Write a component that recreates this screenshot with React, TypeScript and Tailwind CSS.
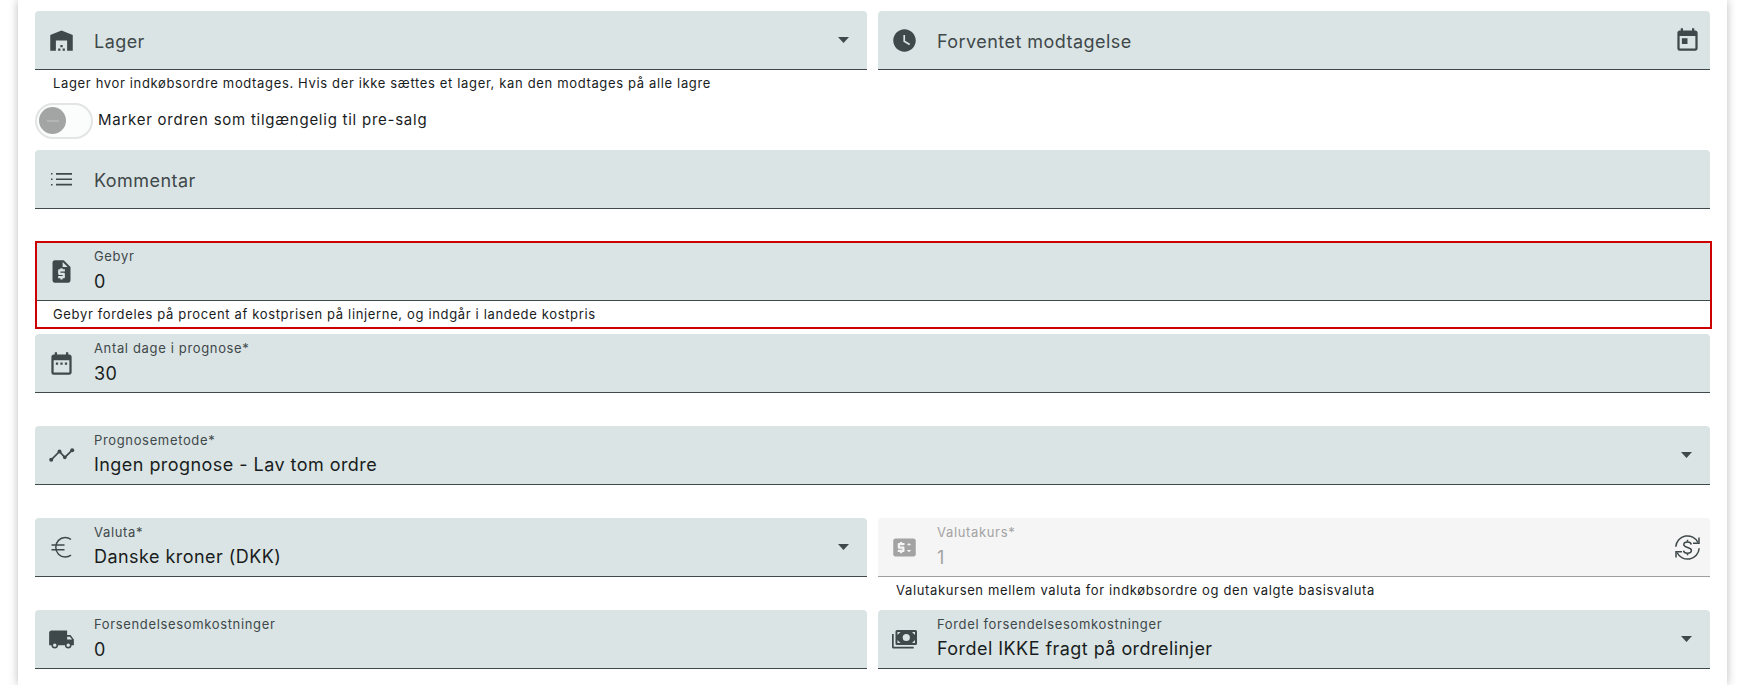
import { useId, useState } from "react";
import type { ReactNode } from "react";
import {
  MdDateRange,
  MdLocalShipping,
  MdPriceChange,
  MdRequestQuote,
  MdToday,
  MdWarehouse,
  MdWatchLater,
} from "react-icons/md";

function ListIcon() {
  return (
    <svg viewBox="0 0 27 27" className="size-[27px]" fill="currentColor" aria-hidden="true">
      <path d="M3 7h1.5v1.5H3zM3 12.5h1.5V14H3zM3 18h1.5v1.5H3zM8 7h16v1.7H8zM8 12.4h16v1.7H8zM8 17.8h16v1.7H8z" />
    </svg>
  );
}

function TimelineIcon() {
  return (
    <svg viewBox="0 0 27 27" className="size-[27px]" fill="currentColor" aria-hidden="true">
      <path d="M3.2 17.8l8.3-8.4 5.300 6 7.400-7.200" fill="none" stroke="currentColor" strokeWidth="1.7" />
      <circle cx="3.2" cy="17.8" r="2" />
      <circle cx="11.5" cy="9.4" r="2" />
      <circle cx="16.8" cy="15.4" r="1.800" />
      <circle cx="24.2" cy="8.2" r="2" />
    </svg>
  );
}

function EuroIcon() {
  return (
    <svg viewBox="0 0 27 27" className="size-[27px]" fill="none" stroke="currentColor" strokeWidth="1.5" aria-hidden="true">
      <path d="M23 5.5C21.3 4.2 19.3 3.6 17.2 3.6c-5.400 0-9.400 4.200-9.400 9.700s4 9.700 9.400 9.700c2.100 0 4.100-.6 5.800-1.900" />
      <path d="M3.500 11h13M3.500 15.700h13" />
    </svg>
  );
}

function CashIcon() {
  return (
    <svg viewBox="0 0 27 27" className="size-[27px]" fill="currentColor" aria-hidden="true">
      <path
        fillRule="evenodd"
        d="M6 4h18.500a1.500 1.500 0 0 1 1.500 1.500v12a1.500 1.500 0 0 1-1.500 1.500H6a1.500 1.500 0 0 1-1.500-1.500v-12A1.500 1.500 0 0 1 6 4zm9.300 3.900a3.600 3.600 0 1 0 0 7.200 3.600 3.600 0 0 0 0-7.200zM6.500 6v3L9.500 6zM24 6h-3l3 3zM6.500 17h3l-3-3zM24 17v-3l-3 3z"
      />
      <path d="M1 8h1.700v12.800h20v1.700H2.500A1.500 1.500 0 0 1 1 21z" />
    </svg>
  );
}

function ExchangeIcon() {
  return (
    <svg viewBox="0 0 27 27" className="size-[27px]" fill="none" stroke="currentColor" strokeWidth="1.5" aria-hidden="true">
      <path d="M1.800 12.700A11.700 11.700 0 0 1 24 8.500M25.200 14.300A11.700 11.700 0 0 1 3 18.500" />
      <path d="M25 3.500v5.700h-6M2 23.500v-5.700h6" />
      <path d="M17.300 10.500c-.3-1.600-1.800-2.600-3.800-2.600s-3.700 1-3.700 2.700c0 3.700 7.600 2.200 7.600 6 0 1.700-1.600 2.700-3.900 2.700s-3.700-1-4-2.700M13.500 5.800v2M13.500 19.300v2" />
    </svg>
  );
}

function Caret() {
  return (
    <svg viewBox="0 0 11 6" className="h-[6px] w-[11px]" fill="currentColor" aria-hidden="true">
      <path d="M0 0h11L5.500 6z" />
    </svg>
  );
}

type FieldProps = {
  label: string;
  icon: ReactNode;
  value?: string;
  hint?: string;
  select?: boolean;
  disabled?: boolean;
  action?: ReactNode;
  highlight?: boolean;
};

function Field({ label, icon, value, hint, select, disabled, action, highlight }: FieldProps) {
  const id = useId();
  const filled = value !== undefined;

  const box = disabled
    ? "border-[#9e9e9e] bg-[#f5f5f5] text-[#a3a3a3]"
    : "border-[#3f484a] bg-[#dae4e4] text-[#3f484a]";
  const control = disabled ? "text-[#a3a3a3]" : "text-[#191c1d]";

  return (
    <div className="relative h-[92px] min-w-0 flex-1">
      <div className={`flex h-[59px] items-center rounded-t border-b ${box}`}>
        <span className="flex w-[59px] shrink-0 pl-[13px]">{icon}</span>
        <div className={filled ? "flex min-w-0 flex-1 flex-col" : "grid min-w-0 flex-1 items-center pt-1"}>
          <label
            htmlFor={id}
            className={
              filled
                ? "text-[13px] leading-5 tracking-wider"
                : "col-start-1 row-start-1 text-lg leading-7 tracking-wide"
            }
          >
            {label}
          </label>
          {select ? (
            <select
              id={id}
              defaultValue={value}
              className={`h-[30px] w-full appearance-none bg-transparent text-lg leading-7 tracking-wide outline-none ${control} ${filled ? "" : "col-start-1 row-start-1"}`}
            >
              {filled ? <option>{value}</option> : <option value="" />}
            </select>
          ) : (
            <input
              id={id}
              defaultValue={value}
              disabled={disabled}
              className={`h-[30px] w-full bg-transparent text-lg leading-7 tracking-wide outline-none ${control} ${filled ? "" : "col-start-1 row-start-1"}`}
            />
          )}
        </div>
        {select && (
          <span className="pointer-events-none mr-[18px]">
            <Caret />
          </span>
        )}
        {action}
      </div>
      {hint && (
        <p className="pl-[18px] pt-[3px] text-[13px] leading-5 tracking-wider text-[#191c1d]">{hint}</p>
      )}
      {highlight && (
        <div className="pointer-events-none absolute -right-0.5 -top-px bottom-[5px] left-0 border-2 border-[#cc0000]" />
      )}
    </div>
  );
}

export default function App() {
  const [presale, setPresale] = useState(false);
  const iconSize = 27;

  return (
    <div className="min-h-screen bg-white px-[18px] font-['Inter',sans-serif]">
      <form className="min-h-screen bg-white px-[17px] pt-[11px] shadow-[0_0_9px_rgba(0,0,0,0.27)]">
        <div className="flex gap-[11px]">
          <Field
            label="Lager"
            icon={<MdWarehouse size={iconSize} />}
            select
            hint="Lager hvor indkøbsordre modtages. Hvis der ikke sættes et lager, kan den modtages på alle lagre"
          />
          <Field
            label="Forventet modtagelse"
            icon={<MdWatchLater size={iconSize} />}
            action={
              <button type="button" aria-label="Vælg dato" className="mr-[9px] text-[#3f484a]">
                <MdToday size={iconSize} />
              </button>
            }
          />
        </div>

        <label className="mb-3 flex h-[35px] items-center gap-[5px] text-[15px] tracking-wider text-[#191c1d]">
          <input
            type="checkbox"
            role="switch"
            checked={presale}
            onChange={(e) => setPresale(e.target.checked)}
            className="peer sr-only"
          />
          <span className="flex h-9 w-[58px] items-center rounded-full border-2 border-[#e3e4e4] bg-[#fbfdfd] px-[2px] peer-checked:justify-end">
            <span className="flex size-[27px] items-center justify-center rounded-full bg-[#a3a5a5]">
              <span className="h-0.5 w-3 bg-[#b3b6b6]" />
            </span>
          </span>
          Marker ordren som tilgængelig til pre-salg
        </label>

        <Field label="Kommentar" icon={<ListIcon />} />
        <Field
          label="Gebyr"
          icon={<MdRequestQuote size={iconSize} />}
          value="0"
          hint="Gebyr fordeles på procent af kostprisen på linjerne, og indgår i landede kostpris"
          highlight
        />
        <Field label="Antal dage i prognose*" icon={<MdDateRange size={iconSize} />} value="30" />
        <Field
          label="Prognosemetode*"
          icon={<TimelineIcon />}
          value="Ingen prognose - Lav tom ordre"
          select
        />

        <div className="flex gap-[11px]">
          <Field label="Valuta*" icon={<EuroIcon />} value="Danske kroner (DKK)" select />
          <Field
            label="Valutakurs*"
            icon={<MdPriceChange size={iconSize} />}
            value="1"
            disabled
            hint="Valutakursen mellem valuta for indkøbsordre og den valgte basisvaluta"
            action={
              <button type="button" aria-label="Opdater valutakurs" className="mr-[9px] text-[#3f484a]">
                <ExchangeIcon />
              </button>
            }
          />
        </div>

        <div className="flex h-[75px] gap-[11px] overflow-hidden">
          <Field label="Forsendelsesomkostninger" icon={<MdLocalShipping size={iconSize} />} value="0" />
          <Field
            label="Fordel forsendelsesomkostninger"
            icon={<CashIcon />}
            value="Fordel IKKE fragt på ordrelinjer"
            select
          />
        </div>
      </form>
    </div>
  );
}
